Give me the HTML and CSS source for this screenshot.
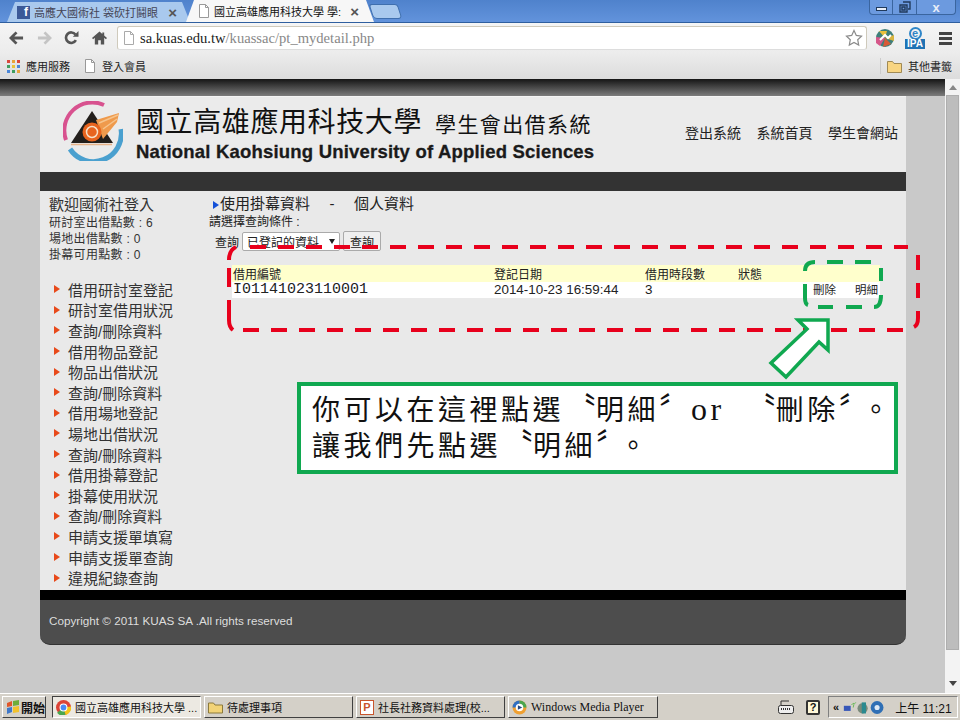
FILE: index.html
```html
<!DOCTYPE html>
<html lang="zh-Hant">
<head>
  <meta charset="UTF-8" />
  <title>國立高雄應用科技大學 學生會出借系統</title>
  <link rel="stylesheet" href="styles.css">
</head>
<body>
  <div class="tabstrip">
    <div class="tab tab-back">
      <span class="fb-icon">f</span>
      <span class="tab-title">高應大國術社 袋砍打鬪眼</span>
      <span class="tab-close">×</span>
    </div>
    <div class="tab tab-active">
      <svg class="page-icon" viewBox="0 0 12 14"><path d="M1.5 .5h6l3 3v10h-9z" fill="#fff" stroke="#999"/><path d="M7.5 .5v3h3" fill="none" stroke="#999"/></svg>
      <span class="tab-title">國立高雄應用科技大學 學:</span>
      <span class="tab-close">×</span>
    </div>
    <div class="tab-new"></div>
    <div class="win-buttons">
      <span class="win-btn win-min"><i></i></span>
      <span class="win-btn win-max"><svg viewBox="0 0 12 12" width="12" height="12"><path d="M4 1h7v7H9M1 4h7v7H1zM3 6h3v3H3z" fill="none" stroke="#203a5c" stroke-width="1.4"/></svg></span>
      <span class="win-btn win-close">x</span>
    </div>
  </div>

  <div class="toolbar">
    <svg class="nav-icon" viewBox="0 0 16 14"><path d="M8 1L2 7l6 6M2 7h13" fill="none" stroke="#555" stroke-width="3"/></svg>
    <svg class="nav-icon" viewBox="0 0 16 14"><path d="M8 1l6 6-6 6M14 7H1" fill="none" stroke="#c4c4c4" stroke-width="3"/></svg>
    <svg class="nav-icon" viewBox="0 0 16 16"><path d="M13 10.5A6 6 0 1 1 12.5 4" fill="none" stroke="#555" stroke-width="3"/><path d="M9.5 6.5H16V0z" fill="#555"/></svg>
    <svg class="nav-icon" viewBox="0 0 16 14"><path d="M8 0L0 7l1.2 1.2L3 6.8V14h3.6V9.5h2.8V14H13V6.8l1.8 1.4L16 7l-3-2.6V1h-2v1.7z" fill="#555"/></svg>
    <div class="omnibox">
      <svg class="page-icon" viewBox="0 0 12 14"><path d="M1.5 .5h6l3 3v10h-9z" fill="#fff" stroke="#aaa"/><path d="M7.5 .5v3h3" fill="none" stroke="#aaa"/></svg>
      <span class="url"><b>sa.kuas.edu.tw</b>/kuassac/pt_mydetail.php</span>
      <svg class="star" viewBox="0 0 18 18"><path d="M9 1.5l2.3 4.9 5.2.7-3.8 3.6 1 5.3L9 13.4 4.3 16l1-5.3L1.5 7.1l5.2-.7z" fill="#fff" stroke="#8a8a8a" stroke-width="1.2"/></svg>
    </div>
    <svg class="ext-color" viewBox="0 0 18 18"><circle cx="9" cy="9" r="9" fill="#3f7f7a"/><path d="M9 9L3 2h8z" fill="#e9c13b"/><path d="M9 9l9-3v6z" fill="#d9b43f"/><path d="M9 9l-2 9 8-3z" fill="#d85a36"/><path d="M9 9L0 8v6l4 3z" fill="#d6578a"/><path d="M4 11l5-5 3 3 3-3" fill="none" stroke="#fff" stroke-width="2"/></svg>
    <div class="ext-ipa"><span class="ipa-e">e</span><span class="ipa-label">IPA</span></div>
    <div class="menu-icon"><i></i><i></i><i></i></div>
  </div>

  <div class="bookmarks">
    <div class="apps-icon">
      <i class="c1"></i><i class="c2"></i><i class="c3"></i>
      <i class="c4"></i><i class="c5"></i><i class="c6"></i>
      <i class="c7"></i><i class="c8"></i><i class="c9"></i>
    </div>
    <span class="bm-label">應用服務</span>
    <svg class="page-icon bm-doc" viewBox="0 0 12 14"><path d="M1.5 .5h6l3 3v10h-9z" fill="#fff" stroke="#999"/><path d="M7.5 .5v3h3" fill="none" stroke="#999"/></svg>
    <span class="bm-label">登入會員</span>
    <div class="bm-other">
      <svg class="folder" viewBox="0 0 15 13"><path d="M.5 12.5v-11h5l1.5 2h7.5v9z" fill="#f8d582" stroke="#a08a55"/></svg>
      <span class="bm-label">其他書籤</span>
    </div>
  </div>

  <div class="viewport">
    <div class="page">
      <div class="page-shade"></div>
      <div class="site">
        <div class="site-header">
          <svg class="logo" viewBox="0 0 60 60">
            <path d="M3 39A28 28 0 0 1 41 4" fill="none" stroke="#d8528f" stroke-width="4"/>
            <path d="M7 48A28 28 0 0 0 58 28" fill="none" stroke="#4aa0cf" stroke-width="5"/>
            <path d="M29 10L50 42H8z" fill="#231f1c"/>
            <path d="M8 43.5h41" stroke="#e8b48a" stroke-width="1.5"/>
            <path d="M33 19L56 12l-2 9-14 17z" fill="#ef9a4c"/>
            <path d="M36 22L55 14M40 28L54 18" stroke="#f6c48c" stroke-width="1.5"/>
            <circle cx="29" cy="31" r="9.5" fill="#e8641e"/>
            <circle cx="29" cy="31" r="5.5" fill="none" stroke="#f7e1c8" stroke-width="1.5"/>
          </svg>
          <div class="brand">
            <div class="brand-zh">國立高雄應用科技大學<span class="brand-sub">學生會出借系統</span></div>
            <div class="brand-en">National Kaohsiung University of Applied Sciences</div>
          </div>
          <nav class="site-nav">
            <a>登出系統</a>
            <a>系統首頁</a>
            <a>學生會網站</a>
          </nav>
        </div>
        <div class="site-bar"></div>
        <div class="site-main">
          <aside class="sidebar">
            <div class="welcome">歡迎國術社登入</div>
            <div class="points">研討室出借點數 : 6</div>
            <div class="points">場地出借點數 : 0</div>
            <div class="points">掛幕可用點數 : 0</div>
            <ul class="side-menu">
              <li>借用研討室登記</li>
              <li>研討室借用狀況</li>
              <li>查詢/刪除資料</li>
              <li>借用物品登記</li>
              <li>物品出借狀況</li>
              <li>查詢/刪除資料</li>
              <li>借用場地登記</li>
              <li>場地出借狀況</li>
              <li>查詢/刪除資料</li>
              <li>借用掛幕登記</li>
              <li>掛幕使用狀況</li>
              <li>查詢/刪除資料</li>
              <li>申請支援單填寫</li>
              <li>申請支援單查詢</li>
              <li>違規紀錄查詢</li>
            </ul>
          </aside>
          <section class="content">
            <h2 class="content-title"><span class="title-arrow"></span>使用掛幕資料<span class="title-dash">-</span>個人資料</h2>
            <div class="filter-label">請選擇查詢條件 :</div>
            <div class="filter-row">
              <span>查詢</span>
              <span class="fake-select">已登記的資料<i></i></span>
              <span class="fake-btn">查詢</span>
            </div>
            <table class="result-table">
              <thead>
                <tr><th class="col-id">借用編號</th><th class="col-date">登記日期</th><th class="col-count">借用時段數</th><th class="col-state">狀態</th><th class="col-del"></th><th class="col-more"></th></tr>
              </thead>
              <tbody>
                <tr><td class="id-cell">I01141023110001</td><td>2014-10-23 16:59:44</td><td>3</td><td></td><td class="act">刪除</td><td class="act">明細</td></tr>
              </tbody>
            </table>
          </section>
        </div>
        <div class="site-line"></div>
        <footer class="site-footer">Copyright © 2011 KUAS SA .All rights reserved</footer>
      </div>
    </div>
    <div class="scrollbar">
      <span class="sb-arrow sb-up"></span>
      <div class="sb-thumb"></div>
      <span class="sb-arrow sb-down"></span>
    </div>
  </div>

  <div class="taskbar">
    <span class="start">
      <svg class="flag" viewBox="0 0 14 14"><path d="M1 3l5-2v5l-5 1z" fill="#e0562a"/><path d="M7 1l6-1v5l-6 1z" fill="#6dad3a"/><path d="M1 8l5-1v5l-5 2z" fill="#3f78c9"/><path d="M7 7l6-1v6l-6 1z" fill="#f2c22c"/></svg>
      開始
    </span>
    <span class="task task-active">
      <svg class="task-icon" viewBox="0 0 14 14"><circle cx="7" cy="7" r="7" fill="#dc4437"/><path d="M7 7L1 12a7 7 0 0 0 8 2z" fill="#4aa64e"/><path d="M7 7l7-1a7 7 0 0 1-5 8z" fill="#f5c518"/><circle cx="7" cy="7" r="3.2" fill="#4a8af4" stroke="#fff"/></svg>
      國立高雄應用科技大學 ...
    </span>
    <span class="task task-folder">
      <svg class="task-icon" viewBox="0 0 15 13"><path d="M.5 12V2h5l1.5 2h7.5v8z" fill="#f2d377" stroke="#8c7a3c"/></svg>
      待處理事項
    </span>
    <span class="task task-ppt">
      <span class="ppt-icon">P</span>
      社長社務資料處理(校...
    </span>
    <span class="task task-wmp">
      <svg class="task-icon" viewBox="0 0 14 14"><circle cx="7" cy="7" r="6.5" fill="#f0a030"/><path d="M7 .5A6.5 6.5 0 0 1 13.5 7H7z" fill="#4aa64e"/><path d="M.5 7A6.5 6.5 0 0 1 7 .5V7z" fill="#2f6fc4"/><circle cx="7" cy="7" r="3.5" fill="#fff"/><path d="M5.5 4.8L9.5 7l-4 2.2z" fill="#24477f"/></svg>
      Windows Media Player
    </span>
    <svg class="tray-kbd" viewBox="0 0 16 14"><path d="M3 5V1h8" fill="none" stroke="#333"/><rect x=".5" y="5.5" width="15" height="8" rx="2" fill="#eee" stroke="#333"/><path d="M3 9h10" stroke="#333" stroke-width="2" stroke-dasharray="1 1"/></svg>
    <span class="tray-help">?</span>
    <span class="tray">
      <span class="tray-chev">«</span>
      <svg class="tray-icons" viewBox="0 0 54 16"><rect x="1" y="6" width="8" height="6" fill="#3757b8"/><path d="M10 5a4 4 0 0 1 3-2M12 8a7 7 0 0 1 3-6" fill="none" stroke="#5bb548"/><circle cx="23" cy="9" r="6" fill="#7a8a7a"/><path d="M22 2h5v13h-5z" fill="#2b8a90"/><circle cx="40" cy="8" r="7.5" fill="#2f6fb5"/><circle cx="40" cy="8" r="3" fill="#dfeaf6"/></svg>
      <span class="clock">上午 11:21</span>
    </span>
  </div>

  <!-- hand drawn annotations, viewBox uses page coordinates -->
  <svg class="marks" viewBox="220 240 710 145">
    <g class="mark-red">
      <path class="dash" d="M250 247H908"/>
      <path d="M918 255V270M918 283V298M918 311V318Q918 325 914 327"/>
      <path class="dash" d="M243 330H904"/>
      <path d="M236 247Q229 250 229 260M229 268V287M229 300V320Q229 327 233 330"/>
    </g>
    <g class="mark-green">
      <path d="M815 262Q805 262 805 271M827 262H843M855 262H871"/>
      <path d="M881 268V281M881 295Q881 307 874 307"/>
      <path d="M818 307H833M846 307H862"/>
      <path d="M805 284V298Q805 304 808 305"/>
    </g>
    <path class="mark-arrow" d="M828 320H798L807 329 771 363 786 377 819 342 828 350Z"/>
  </svg>
  <div class="callout">你可以在這裡點選<span class="q">〝</span>明細<span class="q">〞</span><span class="or">or</span><span class="q q-gap">〝</span>刪除<span class="q">〞</span><span class="stop">。</span><br>讓我們先點選<span class="q">〝</span>明細<span class="q">〞</span><span class="stop">。</span></div>
</body>
</html>
```

FILE: styles.css
```css
* {
  box-sizing: border-box;
}
html, body {
  margin: 0;
  height: 720px;
  overflow: hidden;
}
body {
  display: flex;
  flex-direction: column;
  position: relative;
  font-family: "Liberation Sans", "Noto Sans CJK TC", sans-serif;
  font-size: 12px;
  color: #222;
  background: #ccc;
}

/* browser chrome */
.tabstrip {
  height: 23px;
  display: flex;
  align-items: flex-end;
  padding-left: 7px;
  background: linear-gradient(#4f82cc, #6293dc);
  border-bottom: 1px solid #2f5f9f;
}
.tab {
  height: 20px;
  display: flex;
  align-items: center;
  padding: 0 13px 0 10px;
  clip-path: polygon(0 100%, 8px 0, calc(100% - 8px) 0, 100% 100%);
}
.tab-back {
  width: 183px;
  background: #a9c9ee;
  color: #445;
}
.tab-active {
  width: 188px;
  height: 22px;
  margin-left: -4px;
  padding: 0 15px 0 12px;
  background: #f7f7f7;
  color: #111;
  z-index: 1;
}
.tab-title {
  flex: none;
  margin-left: 4px;
  white-space: nowrap;
  font-size: 11px;
}
.tab-close {
  margin-left: auto;
  font-size: 15px;
  font-weight: bold;
  color: #555;
}
.fb-icon {
  width: 13px;
  height: 13px;
  background: #3b5998;
  color: #fff;
  font-weight: bold;
  font-size: 12px;
  line-height: 13px;
  text-align: right;
  padding-right: 2px;
}
.tab-new {
  width: 29px;
  height: 15px;
  margin: 0 0 3px -3px;
  background: #a9c9ee;
  border: 1px solid #3f6fae;
  border-radius: 3px 3px 4px 4px;
  transform: skewX(18deg);
}
.win-buttons {
  margin-left: auto;
  margin-right: 4px;
  align-self: flex-start;
  display: flex;
  height: 15px;
  border: 1px solid #3a659f;
  border-top: none;
  border-radius: 0 0 4px 4px;
  background: #6c9adf;
}
.win-btn {
  height: 100%;
  display: flex;
  align-items: center;
  justify-content: center;
  border-right: 1px solid #3a659f;
}
.win-min {
  width: 23px;
}
.win-min i {
  width: 11px;
  height: 4px;
  margin-top: 4px;
  background: #e8eef8;
  border: 1px solid #203a5c;
}
.win-max {
  width: 24px;
}
.win-close {
  width: 38px;
  border-right: none;
  font-weight: bold;
  font-size: 13px;
  color: #e8eef8;
}

.toolbar {
  height: 30px;
  display: flex;
  align-items: center;
  padding-left: 9px;
  background: linear-gradient(#f5f5f5, #ececec);
}
.nav-icon {
  width: 15px;
  height: 14px;
  margin-right: 12.5px;
}
.omnibox {
  width: 750px;
  height: 24px;
  margin-left: -2px;
  display: flex;
  align-items: center;
  padding: 0 3px 0 5px;
  background: #fff;
  border: 1px solid #cfcabc;
  border-bottom-color: #ddd;
  border-radius: 3px;
}
.page-icon {
  width: 12px;
  height: 14px;
  flex: none;
}
.url {
  margin-left: 5px;
  font-family: "Liberation Serif", serif;
  font-size: 14.6px;
  color: #888;
}
.url b {
  font-weight: normal;
  color: #222;
}
.star {
  width: 18px;
  height: 18px;
  margin-left: auto;
}
.ext-color {
  width: 18px;
  height: 18px;
  margin-left: 9px;
}
.ext-ipa {
  width: 20px;
  margin-left: 11px;
  display: flex;
  flex-direction: column;
  align-items: center;
  line-height: 1;
}
.ipa-e {
  width: 13px;
  height: 13px;
  margin-bottom: -1px;
  border-radius: 50%;
  border: 2px solid #2f86c8;
  color: #2f86c8;
  font-size: 11px;
  font-weight: bold;
  line-height: 8px;
  text-align: center;
}
.ipa-label {
  width: 20px;
  height: 10px;
  background: #1f73b4;
  color: #fff;
  font-size: 10px;
  font-weight: bold;
  line-height: 10px;
  text-align: center;
}
.menu-icon {
  width: 13px;
  margin-left: 14px;
  display: flex;
  flex-direction: column;
  gap: 2px;
}
.menu-icon i {
  height: 3px;
  background: #444;
}

.bookmarks {
  height: 26px;
  display: flex;
  align-items: center;
  padding-left: 7px;
  background: linear-gradient(#ececec, #dcdcdc);
  color: #222;
}
.apps-icon {
  width: 13px;
  display: grid;
  grid-template-columns: repeat(3, 3px);
  gap: 2px;
}
.apps-icon i {
  height: 3px;
}
.c1 { background: #d9483b; }
.c2 { background: #e8a33a; }
.c3 { background: #d9483b; }
.c4 { background: #3f9e5f; }
.c5 { background: #e8c33a; }
.c6 { background: #4a86d8; }
.c7 { background: #4a86d8; }
.c8 { background: #3f9e5f; }
.c9 { background: #e8a33a; }
.bm-label {
  margin-left: 6px;
  font-size: 11px;
}
.bm-doc {
  margin-left: 14px;
}
.bm-other {
  margin-left: auto;
  margin-right: 8px;
  display: flex;
  align-items: center;
  padding-left: 6px;
  border-left: 1px solid #ccc;
}
.folder {
  width: 15px;
  height: 13px;
}

/* page */
.viewport {
  height: 614px;
  display: flex;
}
.page {
  flex: 1;
  background: #c9c9c9;
  overflow: hidden;
}
.page-shade {
  height: 17px;
  background: linear-gradient(#151515, #7c7c7c);
}
.site {
  width: 866px;
  margin-left: 40px;
}
.site-header {
  height: 76px;
  display: flex;
  background: #ebebeb;
  border-top: 1px solid #f4f4f4;
}
.logo {
  width: 60px;
  height: 60px;
  margin: 4px 0 0 23px;
  flex: none;
}
.brand {
  margin-left: 13px;
  width: 470px;
}
.brand-zh {
  margin-top: 8px;
  height: 36px;
  font-size: 28px;
  line-height: 36px;
  letter-spacing: .6px;
  color: #111;
  white-space: nowrap;
}
.brand-sub {
  margin-left: 13px;
  font-size: 21px;
  letter-spacing: 1.4px;
}
.brand-en {
  font-size: 18.5px;
  font-weight: bold;
  white-space: nowrap;
  color: #1a1a1a;
  letter-spacing: .2px;
  -webkit-text-stroke: .3px #1a1a1a;
}
.site-nav {
  margin-left: auto;
  padding: 25px 8px 0 0;
  display: flex;
  gap: 15.5px;
  font-size: 14px;
  color: #222;
}
.site-bar {
  height: 19px;
  background: #333;
}
.site-main {
  height: 399px;
  display: flex;
  background: #e9e9e9;
}
.sidebar {
  width: 174px;
  padding: 5px 0 0 9px;
}
.welcome {
  font-size: 15px;
  line-height: 18px;
  margin-bottom: 1px;
  color: #333;
}
.points {
  font-size: 12px;
  line-height: 16px;
  letter-spacing: .3px;
  color: #333;
}
.side-menu {
  list-style: none;
  margin: 16px 0 0 5px;
  padding: 0;
}
.side-menu li {
  height: 20.6px;
  display: flex;
  align-items: center;
  font-size: 15px;
  color: #333;
}
.side-menu li::before {
  content: "";
  width: 0;
  height: 0;
  margin-right: 8px;
  border-left: 6px solid #e8491a;
  border-top: 4px solid transparent;
  border-bottom: 4px solid transparent;
}
.content {
  flex: 1;
  padding: 4px 0 0 0;
}
.content-title {
  margin: 0 0 0 -1px;
  font-size: 15px;
  font-weight: normal;
  line-height: 18px;
  color: #222;
}
.title-arrow {
  display: inline-block;
  margin-right: 1px;
  border-left: 6px solid #1450d8;
  border-top: 4px solid transparent;
  border-bottom: 4px solid transparent;
}
.title-dash {
  margin: 0 19.5px;
}
.filter-label {
  margin-left: -5px;
  font-size: 12px;
  line-height: 14px;
  margin-top: 2px;
}
.filter-row {
  display: flex;
  align-items: center;
  height: 20px;
  margin-top: 2px;
  margin-left: 1px;
  font-size: 12px;
  gap: 3px;
}
.fake-select {
  width: 98px;
  height: 19px;
  display: flex;
  align-items: center;
  justify-content: space-between;
  padding: 0 4px;
  background: #fff;
  border: 1px solid #aaa;
  border-radius: 2px;
}
.fake-select i {
  border-top: 5px solid #222;
  border-left: 3px solid transparent;
  border-right: 3px solid transparent;
}
.fake-btn {
  width: 38px;
  height: 20px;
  display: flex;
  align-items: center;
  justify-content: center;
  background: #efefef;
  border: 1px solid #aaa;
  border-radius: 2px;
}
.result-table {
  width: 648px;
  margin: 14px 0 0 18px;
  border-collapse: collapse;
  table-layout: fixed;
  font-size: 12px;
}
.result-table th {
  height: 16px;
  padding: 0 0 0 1px;
  background: #ffffcc;
  font-weight: normal;
  text-align: left;
}
.result-table td {
  height: 16px;
  padding: 0 0 0 1px;
  background: #fff;
  font-size: 13.4px;
  line-height: 16px;
  white-space: nowrap;
}
.result-table td.id-cell {
  font-family: "Liberation Mono", monospace;
  font-size: 15px;
}
.result-table td.act {
  font-size: 11.5px;
}
.col-id { width: 261px; }
.col-date { width: 151px; }
.col-count { width: 93px; }
.col-state { width: 75px; }
.col-del { width: 42px; }
.site-line {
  height: 10px;
  background: #000;
}
.site-footer {
  height: 45px;
  padding: 14px 0 0 9px;
  background: #4d4d4d;
  border-radius: 0 0 10px 10px;
  border-bottom: 1px solid #333;
  color: #ddd;
  font-size: 11.7px;
}
.scrollbar {
  width: 15px;
  display: flex;
  flex-direction: column;
  background: #f3f3f3;
}
.sb-arrow {
  flex: none;
  align-self: center;
  width: 0;
  height: 0;
  border-left: 4px solid transparent;
  border-right: 4px solid transparent;
}
.sb-up {
  margin: 6px 0 5px;
  border-bottom: 5px solid #888;
}
.sb-down {
  margin: auto 0 7px;
  border-top: 5px solid #444;
}
.sb-thumb {
  height: 555px;
  margin: 0 1px;
  background: #bdbdbd;
  border: 1px solid #aeaeae;
}

/* windows taskbar */
.taskbar {
  height: 27px;
  display: flex;
  align-items: center;
  padding-left: 2px;
  background: #d4d0c8;
  border-top: 1px solid #fff;
  font-size: 11px;
  color: #111;
}
.start, .task {
  height: 22px;
  display: flex;
  align-items: center;
  gap: 4px;
  padding-left: 3px;
  border: 1px solid;
  border-color: #fff #404040 #404040 #fff;
  white-space: nowrap;
}
.start {
  width: 44px;
  font-weight: bold;
  font-size: 12px;
  gap: 1px;
}
.flag {
  width: 14px;
  height: 14px;
  flex: none;
}
.task {
  margin-left: 3px;
}
.task-active {
  width: 149px;
  background: #ece9e2;
  border-color: #404040 #fff #fff #404040;
  margin-left: 6px;
}
.task-folder {
  width: 149px;
}
.task-ppt {
  width: 149px;
}
.task-wmp {
  width: 150px;
  font-family: "Liberation Serif", serif;
  font-size: 12px;
}
.task-icon {
  width: 15px;
  height: 15px;
  flex: none;
}
.ppt-icon {
  width: 14px;
  height: 15px;
  flex: none;
  background: #fff;
  border: 1px solid #c9552c;
  color: #c9552c;
  font-weight: bold;
  line-height: 13px;
  text-align: center;
}
.tray-kbd {
  width: 16px;
  height: 14px;
  margin-left: auto;
}
.tray-help {
  width: 14px;
  height: 15px;
  margin-left: 12px;
  border: 2px solid #333;
  border-radius: 2px;
  background: #fff8d8;
  font-weight: bold;
  font-size: 11px;
  line-height: 11px;
  text-align: center;
}
.tray {
  width: 130px;
  height: 22px;
  margin: 0 2px 0 8px;
  display: flex;
  align-items: center;
  padding-left: 4px;
  border: 1px solid;
  border-color: #808080 #fff #fff #808080;
  white-space: nowrap;
}
.tray-chev {
  font-weight: bold;
}
.tray-icons {
  width: 46px;
  height: 15px;
  margin-left: 4px;
}
.clock {
  margin-left: 6px;
  font-size: 12px;
}

/* annotations drawn over the screenshot */
.marks {
  position: absolute;
  left: 220px;
  top: 240px;
  width: 710px;
  height: 145px;
}
.marks path {
  fill: none;
  stroke-width: 4;
}
.mark-red {
  stroke: #e8001c;
}
.mark-red .dash {
  stroke-dasharray: 16 12;
}
.mark-green {
  stroke: #10a850;
}
.marks .mark-arrow {
  fill: #fff;
  stroke: #10a850;
  stroke-width: 3.5;
}
.callout {
  position: absolute;
  left: 297px;
  top: 382px;
  width: 601px;
  height: 92px;
  padding: 5px 0 0 11px;
  background: #fff;
  border: 4px solid #10a850;
  font-family: "Noto Sans CJK TC", sans-serif;
  font-size: 28px;
  line-height: 35px;
  letter-spacing: 3.5px;
  color: #111;
  white-space: nowrap;
}
.callout .q {
  font-size: 32px;
  line-height: 30px;
  letter-spacing: 0;
}
.callout .q-gap {
  margin-left: 19px;
}
.callout .or {
  font-family: "Liberation Serif", serif;
  font-size: 32px;
}
.callout .stop {
  margin-left: 7px;
}
```
